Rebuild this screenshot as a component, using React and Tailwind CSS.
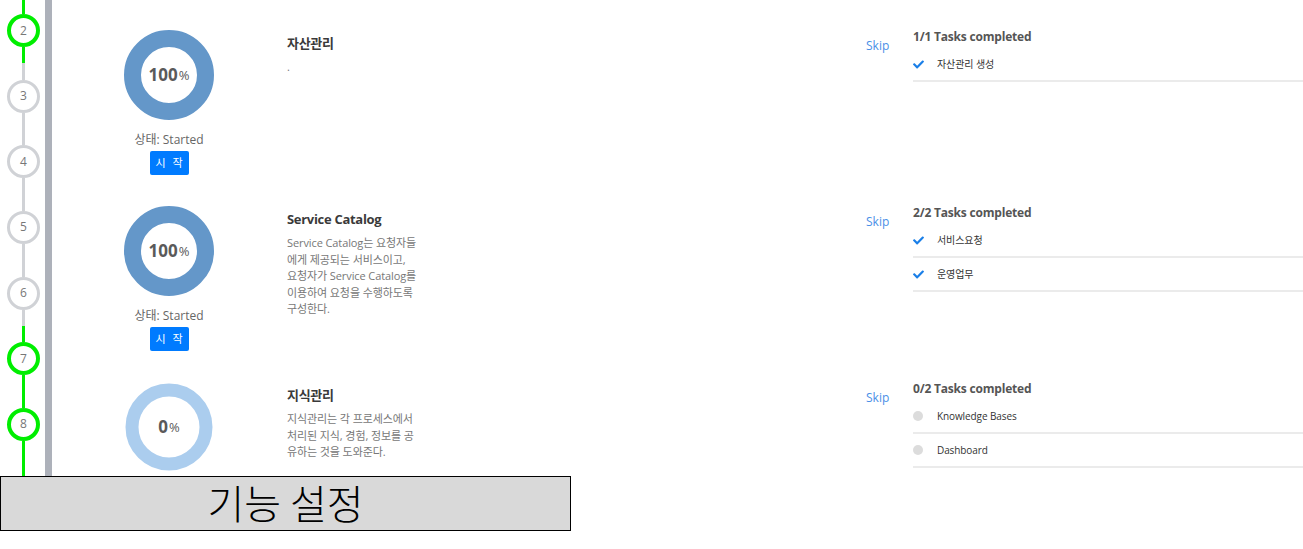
import { FaCheck } from "react-icons/fa";

const sections = [
    {
        pct: 100,
        title: "자산관리",
        desc: ["."],
        done: 1,
        tasks: [{ label: "자산관리 생성", done: true }],
    },
    {
        pct: 100,
        title: "Service Catalog",
        desc: [
            "Service Catalog는 요청자들",
            "에게 제공되는 서비스이고,",
            "요청자가 Service Catalog를",
            "이용하여 요청을 수행하도록",
            "구성한다.",
        ],
        done: 2,
        tasks: [
            { label: "서비스요청", done: true },
            { label: "운영업무", done: true },
        ],
    },
    {
        pct: 0,
        title: "지식관리",
        desc: [
            "지식관리는 각 프로세스에서",
            "처리된 지식, 경험, 정보를 공",
            "유하는 것을 도와준다.",
        ],
        done: 0,
        tasks: [
            { label: "Knowledge Bases", done: false },
            { label: "Dashboard", done: false },
        ],
    },
];

function Step({ n, on }) {
    return (
        <div
            className={
                on
                    ? "w-[33px] h-[33px] shrink-0 rounded-full border-4 border-[#00ee00] bg-white flex items-center justify-center text-[12px] text-[#777]"
                    : "w-[33px] h-[33px] shrink-0 rounded-full border-[3px] border-[#d0d2d6] bg-white flex items-center justify-center text-[12px] text-[#777]"
            }
        >
            {n}
        </div>
    );
}

function Line({ green, h }) {
    return (
        <div
            className={green ? "w-[3px] shrink-0 bg-[#00ee00]" : "w-[3px] shrink-0 bg-[#d0d2d6]"}
            style={{ height: h }}
        />
    );
}

function Timeline() {
    const half = 16;
    const seg = 32.67;
    return (
        <div className="w-[45px] shrink-0 flex flex-col items-center pl-[2px]">
            <Line green h={14} />
            <Step n={2} on />
            <Line green h={half} />
            <Line h={seg - half} />
            <Step n={3} />
            <Line h={seg} />
            <Step n={4} />
            <Line h={seg} />
            <Step n={5} />
            <Line h={seg} />
            <Step n={6} />
            <Line h={half} />
            <Line green h={seg - half} />
            <Step n={7} on />
            <Line green h={seg} />
            <Step n={8} on />
            <div className="w-[3px] flex-1 bg-[#00ee00]" />
        </div>
    );
}

function Donut({ pct }) {
    const full = pct >= 100;
    return (
        <div className="relative w-[90px] h-[90px]">
            <svg width="90" height="90" viewBox="0 0 90 90">
                {full ? (
                    <circle cx="45" cy="45" r="36.5" fill="none" stroke="#6497c9" strokeWidth="17" />
                ) : (
                    <circle cx="45" cy="45" r="37" fill="none" stroke="#abcdee" strokeWidth="13" />
                )}
            </svg>
            <div className="absolute inset-0 flex items-center justify-center text-[#5a5a5a]">
                <span className="text-[17px] font-bold">{pct}</span>
                <span className="text-[13px] ml-[1px] mt-[2px]">%</span>
            </div>
        </div>
    );
}

function Section({ s, last }) {
    return (
        <div className="h-[176px] shrink-0 flex">
            {/* progress */}
            <div className="ml-[72px] w-[90px] pt-[30px] flex flex-col items-center shrink-0">
                <Donut pct={s.pct} />
                {!last && (
                    <>
                        <div className="mt-[12px] text-[12px] leading-4 text-[#666] whitespace-nowrap">상태: Started</div>
                        <button className="mt-[3px] w-[39px] h-[24px] rounded-[2px] bg-[#007bff] text-white text-[11px] tracking-[2px] pl-[2px]">
                            시 작
                        </button>
                    </>
                )}
            </div>

            {/* description */}
            <div className="ml-[73px] w-[150px] pt-[34px] shrink-0">
                <div className="text-[13px] leading-[18px] font-bold text-[#3a3a3a] tracking-[-0.3px]">{s.title}</div>
                <div className="mt-[7px] text-[11px] leading-[16.5px] text-[#777] tracking-[-0.1px]">
                    {s.desc.map((l) => (
                        <div key={l} className="whitespace-nowrap">{l}</div>
                    ))}
                </div>
            </div>

            <div className="flex-1" />

            {/* skip */}
            <div className="w-[47px] pt-[39px] shrink-0">
                <a className="block text-[12px] leading-[14px] text-[#4a8fe7]">Skip</a>
            </div>

            {/* tasks */}
            <div className="w-[390px] pt-[28px] shrink-0">
                <div className="h-[20px] text-[12px] leading-[18px] font-bold text-[#555] tracking-[-0.2px]">
                    {s.done}/{s.tasks.length} Tasks completed
                </div>
                {s.tasks.map((t) => (
                    <div key={t.label} className="h-[34px] flex items-center border-b-2 border-[#ebebeb]">
                        <div className="w-[24px] shrink-0 flex items-center">
                            {t.done ? (
                                <FaCheck className="w-[11px] h-[11px] text-[#1a7fe8]" />
                            ) : (
                                <span className="w-[10px] h-[10px] rounded-full bg-[#dcdcdc]" />
                            )}
                        </div>
                        <span className="text-[10px] text-[#333] tracking-[-0.1px]">{t.label}</span>
                    </div>
                ))}
            </div>
        </div>
    );
}

export default function App() {
    return (
        <div className="w-[1303px] h-[549px] bg-white overflow-hidden font-['Open_Sans','Noto_Sans_CJK_KR',sans-serif]">
            <div className="flex h-[476px] overflow-hidden">
                <Timeline />
                <div className="w-[7px] shrink-0 bg-[#adb1ba]" />
                <div className="flex-1 flex flex-col">
                    {sections.map((s, i) => (
                        <Section key={s.title} s={s} last={i === sections.length - 1} />
                    ))}
                </div>
            </div>
            <div className="w-[571px] h-[55px] pb-[4px] border border-black bg-[#d9d9d9] flex items-center justify-center text-[40px] leading-none font-light text-black font-['Noto_Sans_CJK_KR',sans-serif]">
                기능 설정
            </div>
        </div>
    );
}
